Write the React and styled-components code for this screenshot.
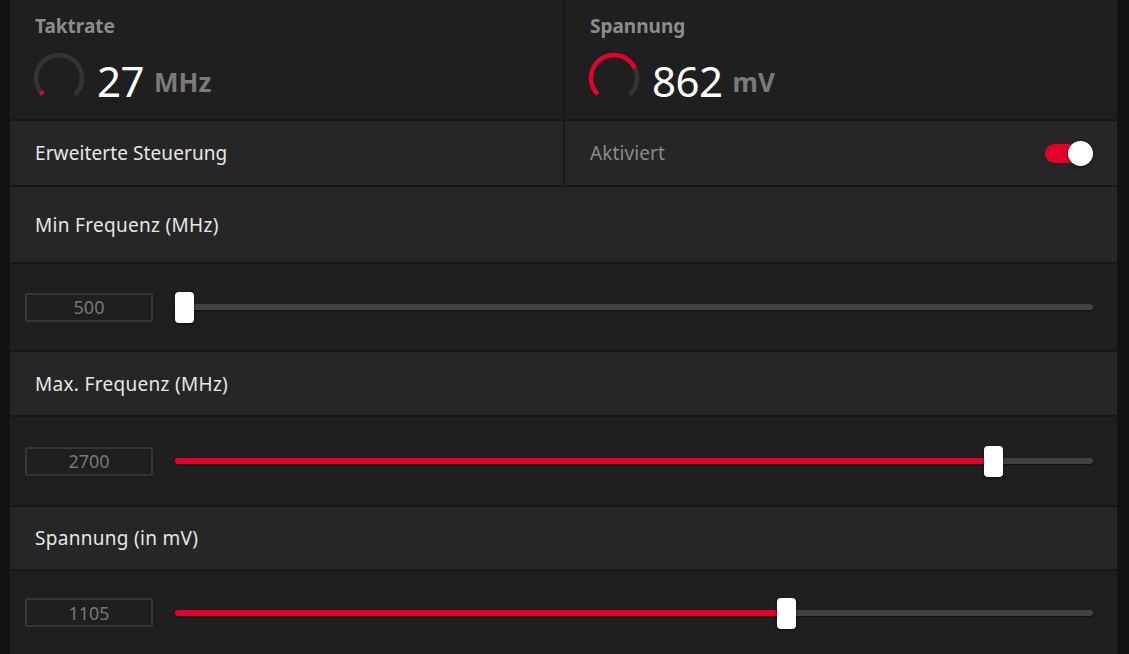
import React from "react";
import styled, { createGlobalStyle } from "styled-components";

const Global = createGlobalStyle`
  html, body { margin: 0; padding: 0; background: #121212; }
  body { font-family: "Noto Sans", "Open Sans", sans-serif; overflow: hidden; }
`;

const Page = styled.div`
  width: 1129px;
  height: 654px;
  box-sizing: border-box;
  padding: 0 12px 0 10px;
  background: #121212;
  overflow: hidden;
`;

const Panel = styled.div`
  display: flex;
  flex-direction: column;
  gap: 2px;
  background: #181818;
  height: 100%;
`;

const Split = styled.div`
  display: grid;
  grid-template-columns: 553px 1fr;
  gap: 2px;
  height: ${(p) => p.$h}px;
  flex: none;
`;

const StatCell = styled.div`
  background: #1f1f1f;
  padding: 13px 25px 0 22px;
  display: flex;
  flex-direction: column;
`;

const StatLabel = styled.div`
  color: #8c8c8c;
  font-weight: 700;
  font-size: 19px;
  line-height: 26px;
  margin-left: 3px;
`;

const StatLine = styled.div`
  display: flex;
  align-items: center;
  margin-top: 10px;
`;

const StatValue = styled.span`
  color: #ffffff;
  font-size: 42px;
  font-weight: 400;
  line-height: 52px;
  margin-left: 11px;
  margin-top: 6px;
  letter-spacing: -0.5px;
`;

const StatUnit = styled.span`
  color: #7a7a7a;
  font-size: 26px;
  font-weight: 700;
  margin-left: 10px;
  margin-top: 8px;
`;

const ToggleCell = styled.div`
  background: #262626;
  display: flex;
  align-items: center;
  justify-content: space-between;
  padding: 0 24px 0 25px;
  color: ${(p) => (p.$muted ? "#8a8a8a" : "#e6e6e6")};
  font-size: 19px;
  letter-spacing: 0.1px;
`;

const Toggle = styled.div`
  position: relative;
  width: 48px;
  height: 25px;
  display: flex;
  align-items: center;
`;

const ToggleTrack = styled.div`
  width: 42px;
  height: 19px;
  border-radius: 10px;
  background: #e4002b;
`;

const ToggleKnob = styled.div`
  position: absolute;
  right: 0;
  top: 0;
  width: 25px;
  height: 25px;
  border-radius: 50%;
  background: #ffffff;
  box-shadow: 0 1px 3px rgba(0, 0, 0, 0.6);
`;

const Header = styled.div`
  background: #262626;
  height: ${(p) => p.$h}px;
  flex: none;
  display: flex;
  align-items: center;
  padding-left: 25px;
  color: #e6e6e6;
  font-size: 19px;
  letter-spacing: 0.3px;
`;

const SliderRow = styled.div`
  background: #1f1f1f;
  height: ${(p) => p.$h}px;
  flex: ${(p) => (p.$grow ? "1" : "none")};
  display: flex;
  align-items: center;
  padding: 0 24px 0 15px;
  gap: 22px;
`;

const ValueBox = styled.div`
  width: 128px;
  height: 29px;
  box-sizing: border-box;
  border: 2px solid #363636;
  border-radius: 2px;
  display: flex;
  align-items: center;
  justify-content: center;
  color: #777777;
  font-size: 18px;
  flex: none;
`;

const Track = styled.div`
  position: relative;
  flex: 1;
  height: 6px;
  border-radius: 3px;
  background: #424242;
  box-shadow: 0 1px 2px rgba(0, 0, 0, 0.5);
`;

const Fill = styled.div`
  position: absolute;
  left: 0;
  top: 0;
  bottom: 0;
  border-radius: 3px;
  background: #e4002b;
`;

const Thumb = styled.div`
  position: absolute;
  top: -12px;
  width: 19px;
  height: 31px;
  box-sizing: border-box;
  border-radius: 4px;
  background: #ffffff;
  box-shadow: 0 1px 3px rgba(0, 0, 0, 0.6);
`;

const GaugeSvg = styled.svg`
  flex: none;
  display: block;
`;

function Gauge({ frac }) {
  const r = 23;
  const c = 2 * Math.PI * r;
  const arc = c * 0.75;
  return (
    <GaugeSvg width="54" height="54" viewBox="0 0 54 54">
      <g transform="rotate(135 27 27)">
        <circle cx="27" cy="27" r={r} fill="none" stroke="#343434" strokeWidth="4.5"
          strokeDasharray={`${arc} ${c}`} />
        <circle cx="27" cy="27" r={r} fill="none" stroke="#e4002b" strokeWidth="4.5"
          strokeDasharray={`${arc * frac} ${c}`} />
      </g>
    </GaugeSvg>
  );
}

function Stat({ label, value, unit, frac }) {
  return (
    <StatCell>
      <StatLabel>{label}</StatLabel>
      <StatLine>
        <Gauge frac={frac} />
        <StatValue>{value}</StatValue>
        <StatUnit>{unit}</StatUnit>
      </StatLine>
    </StatCell>
  );
}

const THUMB_TRAVEL = 918 - 19;

function Slider({ value, frac, h, grow }) {
  const left = Math.round(frac * THUMB_TRAVEL);
  return (
    <SliderRow $h={h} $grow={grow}>
      <ValueBox>{value}</ValueBox>
      <Track>
        {frac > 0 && <Fill style={{ width: left + 2 }} />}
        <Thumb style={{ left }} />
      </Track>
    </SliderRow>
  );
}

export default function App() {
  return (
    <>
      <Global />
      <Page>
        <Panel>
          <Split $h={119}>
            <Stat label="Taktrate" value="27" unit="MHz" frac={0.03} />
            <Stat label="Spannung" value="862" unit="mV" frac={0.735} />
          </Split>
          <Split $h={64}>
            <ToggleCell>Erweiterte Steuerung</ToggleCell>
            <ToggleCell $muted>
              Aktiviert
              <Toggle>
                <ToggleTrack />
                <ToggleKnob />
              </Toggle>
            </ToggleCell>
          </Split>
          <Header $h={75}>Min Frequenz (MHz)</Header>
          <Slider value="500" frac={0} h={86} />
          <Header $h={63}>Max. Frequenz (MHz)</Header>
          <Slider value="2700" frac={0.9} h={88} />
          <Header $h={62}>Spannung (in mV)</Header>
          <Slider value="1105" frac={0.67} h={84} grow />
        </Panel>
      </Page>
    </>
  );
}
